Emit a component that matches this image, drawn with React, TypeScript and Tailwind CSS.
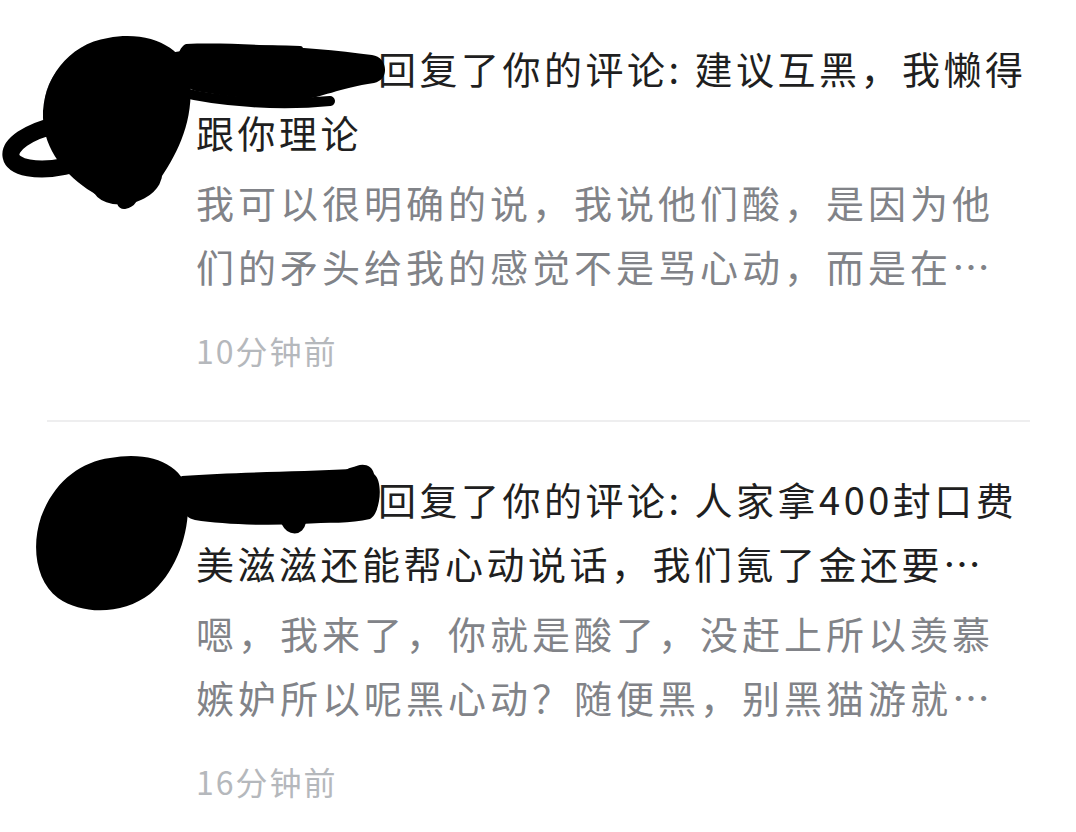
import React from "react";

const font = { fontFamily: '"Noto Sans CJK SC", "Noto Sans", sans-serif' };

function Scribble1() {
  return (
    <svg className="absolute left-0 top-0 pointer-events-none" width="420" height="230" viewBox="0 0 420 230">
      {/* big blob */}
      <path d="M108 38 C150 30 186 48 190 80 C194 120 178 152 162 176 C146 198 112 206 92 192 C66 176 44 150 43 118 C42 80 68 44 108 38 Z" fill="#000" />
      {/* loop left */}
      <ellipse cx="60" cy="146" rx="50" ry="21" fill="none" stroke="#000" strokeWidth="17" transform="rotate(-12 60 146)" />
      {/* lower loops */}
      <path d="M92 162 C122 150 162 160 152 180 C142 198 106 202 100 186" fill="none" stroke="#000" strokeWidth="17" strokeLinecap="round" />
      <path d="M112 176 C130 190 136 200 124 202" fill="none" stroke="#000" strokeWidth="14" strokeLinecap="round" />
      {/* band */}
      <path d="M186 44 C240 42 320 48 372 55 C388 57 390 80 374 83 C340 88 320 98 300 100 C260 101 225 96 196 91 C176 87 172 50 186 44 Z" fill="#000" />
      <path d="M170 56 C200 50 260 47 300 49" fill="none" stroke="#000" strokeWidth="6" strokeLinecap="round" />
      <path d="M180 92 C220 102 280 106 330 101" fill="none" stroke="#000" strokeWidth="10" strokeLinecap="round" />
    </svg>
  );
}

function Scribble2() {
  return (
    <svg className="absolute left-0 top-0 pointer-events-none" width="420" height="230" viewBox="0 0 420 230">
      <path d="M110 36 C152 28 187 44 188 75 C190 112 176 150 150 172 C124 192 84 194 58 176 C36 160 31 125 41 95 C54 60 80 40 110 36 Z" fill="#000" />
      <path d="M182 54 C230 50 300 50 352 47 C360 40 372 42 374 52 C384 60 380 92 370 97 C350 102 330 100 300 102 C260 104 220 102 195 98 C176 94 170 60 182 54 Z" fill="#000" />
      <path d="M285 100 C290 110 300 110 302 100" fill="#000" stroke="#000" strokeWidth="8" strokeLinecap="round" />
      <path d="M340 62 C350 50 362 48 368 56" fill="none" stroke="#000" strokeWidth="14" strokeLinecap="round" />
    </svg>
  );
}

function Item({
  name,
  titleLines,
  bodyLines,
  time,
  scribble,
  top,
}: {
  name: string;
  titleLines: [string, string];
  bodyLines: [string, string];
  time: string;
  scribble: React.ReactNode;
  top: string;
}) {
  return (
    <div className={`relative flex ${top}`}>
      <div className="w-[196px] shrink-0">
        <div className="ml-[44px] mt-[12px] w-[122px] h-[122px] rounded-full bg-[#2a2a30] border-[3px] border-[#55555d]" />
      </div>
      <div className="flex flex-col" style={font}>
        <div className="text-[38px] leading-[64px] tracking-[3.5px] text-[#1f1f21] whitespace-nowrap">
          <div>
            <span className="inline-block w-[182px] overflow-hidden align-top">{name}</span>
            {titleLines[0]}
          </div>
          <div>{titleLines[1]}</div>
        </div>
        <div className="mt-[6px] text-[38px] leading-[64px] tracking-[4px] text-[#818388] whitespace-nowrap">
          <div>{bodyLines[0]}</div>
          <div>{bodyLines[1]}</div>
        </div>
        <div className="mt-[30px] text-[32px] leading-[44px] tracking-[2px] text-[#b5b8bc] whitespace-nowrap">
          {time}
        </div>
      </div>
      {scribble}
    </div>
  );
}

export default function App() {
  return (
    <div className="w-[1076px] h-[832px] bg-white overflow-hidden">
      <Item
        top="pt-[36px] pb-[48px]"
        name="用户昵称"
        titleLines={["回复了你的评论: 建议互黑，我懒得", "跟你理论"]}
        bodyLines={["我可以很明确的说，我说他们酸，是因为他", "们的矛头给我的感觉不是骂心动，而是在…"]}
        time="10分钟前"
        scribble={<Scribble1 />}
      />
      <div className="ml-[47px] w-[983px] h-[2px] bg-[#eeeeef]" />
      <Item
        top="pt-[45px]"
        name="用户昵称"
        titleLines={["回复了你的评论: 人家拿400封口费", "美滋滋还能帮心动说话，我们氪了金还要…"]}
        bodyLines={["嗯，我来了，你就是酸了，没赶上所以羡慕", "嫉妒所以呢黑心动？随便黑，别黑猫游就…"]}
        time="16分钟前"
        scribble={<Scribble2 />}
      />
    </div>
  );
}
